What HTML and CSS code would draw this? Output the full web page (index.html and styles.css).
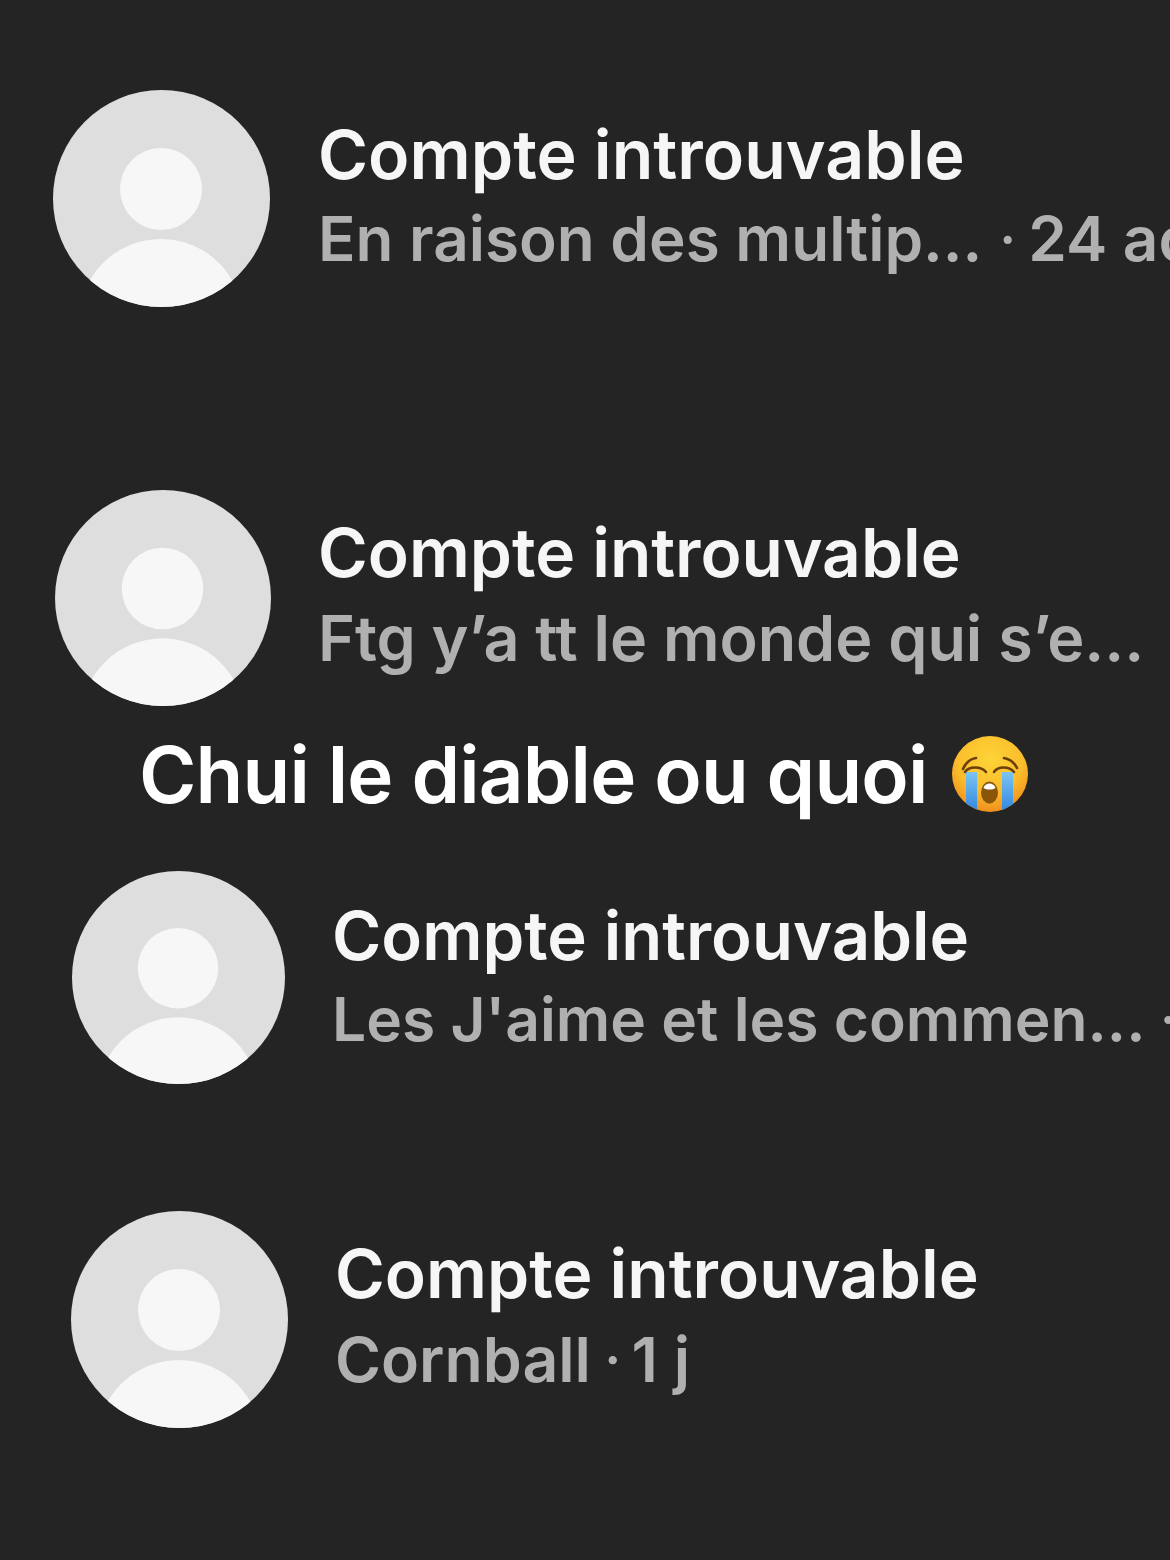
FILE: index.html
```html
<!DOCTYPE html>
<html lang="fr">
<head>
  <meta charset="UTF-8" />
  <meta name="viewport" content="width=device-width, initial-scale=1.0"/>
  <title>Compte introuvable</title>
  <link rel="stylesheet" href="styles.css">
</head>
<body>
  <svg class="defs" width="0" height="0" aria-hidden="true">
    <defs>
      <clipPath id="avatarClip"><circle cx="108.5" cy="108.5" r="108.5"/></clipPath>
      <clipPath id="faceClip"><circle cx="39" cy="38" r="38"/></clipPath>
      <radialGradient id="faceFill" cx="50%" cy="30%" r="72%">
        <stop offset="0" stop-color="#fdd437"/>
        <stop offset="0.6" stop-color="#fbbd2c"/>
        <stop offset="1" stop-color="#ee8c1b"/>
      </radialGradient>
      <linearGradient id="tearFill" x1="0" y1="0" x2="0" y2="1">
        <stop offset="0" stop-color="#7cc4f2"/>
        <stop offset="1" stop-color="#2f86e0"/>
      </linearGradient>
      <symbol id="avatar" viewBox="0 0 217 217">
        <circle cx="108.5" cy="108.5" r="108.5" fill="#dedede"/>
        <g clip-path="url(#avatarClip)" fill="#f7f7f7">
          <circle cx="108" cy="99" r="41"/>
          <circle cx="108" cy="231" r="82"/>
        </g>
      </symbol>
    </defs>
  </svg>

  <div class="feed">
    <div class="row row-one">
      <svg class="avatar"><use href="#avatar"/></svg>
      <div class="info">
        <div class="name">Compte introuvable</div>
        <div class="sub">En raison des multip... <span class="dot">·</span> 24 août</div>
      </div>
    </div>

    <div class="row row-two">
      <svg class="avatar"><use href="#avatar"/></svg>
      <div class="info">
        <div class="name">Compte introuvable</div>
        <div class="sub">Ftg y’a tt le monde qui s’e... <span class="dot">·</span> 3 j</div>
      </div>
    </div>

    <div class="caption">
      <span>Chui le diable ou quoi</span>
      <svg class="emoji" viewBox="0 0 78 76" role="img" aria-label="visage en pleurs">
        <circle cx="39" cy="38" r="38" fill="url(#faceFill)"/>
        <g clip-path="url(#faceClip)">
          <rect x="15" y="36" width="11" height="40" fill="url(#tearFill)"/>
          <rect x="51" y="36" width="11" height="40" fill="url(#tearFill)"/>
        </g>
        <path d="M12 33C15 26 19 23 25 22M66 32C63 26 59 23 53 22" fill="none" stroke="#6b3f0c" stroke-width="2.6" stroke-linecap="round"/>
        <path d="M14 36C18 30 30 30 35 36M43 36C47 30 58 30 63 36" fill="none" stroke="#6b3f0c" stroke-width="2.6" stroke-linecap="round"/>
        <ellipse cx="38.5" cy="56.5" rx="8.5" ry="11" fill="#8a5508"/>
        <path d="M32.5 52C34 46 43 46 44.5 52C41 54 36 54 32.5 52Z" fill="#fff"/>
      </svg>
    </div>

    <div class="row row-three">
      <svg class="avatar"><use href="#avatar"/></svg>
      <div class="info">
        <div class="name">Compte introuvable</div>
        <div class="sub">Les J'aime et les commen... <span class="dot">·</span> 2 j</div>
      </div>
    </div>

    <div class="row row-four">
      <svg class="avatar"><use href="#avatar"/></svg>
      <div class="info">
        <div class="name">Compte introuvable</div>
        <div class="sub">Cornball <span class="dot">·</span> 1 j</div>
      </div>
    </div>
  </div>
</body>
</html>
```

FILE: styles.css
```css
html, body {
  margin: 0;
  height: 100%;
}

body {
  background-color: #242424;
  color: #f6f6f6;
  font-family: Inter, "Liberation Sans", sans-serif;
  overflow: hidden;
}

.defs {
  display: block;
  height: 0;
}

.feed {
  display: flex;
  flex-direction: column;
  height: 1560px;
  overflow: hidden;
}

.row {
  display: flex;
  align-items: center;
  white-space: nowrap;
}

.avatar {
  flex: none;
  width: 217px;
  height: 217px;
}

.info {
  display: flex;
  flex-direction: column;
  gap: 7px;
  margin-bottom: 5px;
}

.name {
  font-size: 68px;
  font-weight: 600;
  line-height: 78px;
}

.sub {
  font-size: 62px;
  font-weight: 600;
  line-height: 78px;
  color: #b0b0b0;
}

.dot {
  margin-right: -6px;
  font-weight: 400;
}

.row-one {
  margin: 90px 0 0 53px;
  gap: 48px;
}

.row-one .dot {
  margin-left: 2px;
  margin-right: -4px;
}

.row-two {
  margin: 183px 0 0 55px;
  gap: 47px;
}

.row-two .avatar {
  width: 216px;
  height: 216px;
}

.row-two .name {
  font-size: 67.6px;
}

.row-two .sub {
  font-size: 62.8px;
}

.row-two .dot {
  margin-left: 8px;
}

.caption {
  display: flex;
  align-items: center;
  gap: 23px;
  margin: 18px 0 0 139px;
  height: 100px;
  font-size: 78px;
  font-weight: 600;
  letter-spacing: -0.85px;
  color: #fff;
}

.emoji {
  flex: none;
  width: 78px;
  height: 76px;
}

.row-three {
  margin: 47px 0 0 72px;
  gap: 47px;
}

.row-three .avatar {
  width: 213px;
  height: 213px;
}

.row-three .info {
  gap: 5px;
  margin-bottom: 0;
}

.row-three .name {
  font-size: 67px;
}

.row-three .sub {
  font-size: 60.5px;
}

.row-four {
  margin: 127px 0 0 71px;
  gap: 47px;
}

.row-four .info {
  gap: 8px;
  margin-bottom: 7px;
}

.row-four .name {
  font-size: 67.7px;
}

.row-four .sub {
  font-size: 62.5px;
}

.row-four .dot {
  margin-left: -3px;
}
```
